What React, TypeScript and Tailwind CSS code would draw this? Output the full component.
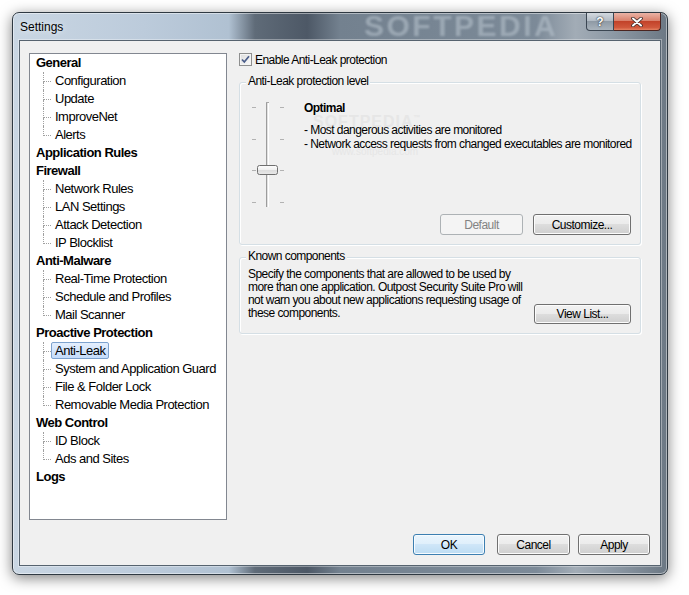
import React from 'react';

type Group = { label: string; children: string[] };

const groups: Group[] = [
  { label: 'General', children: ['Configuration', 'Update', 'ImproveNet', 'Alerts'] },
  { label: 'Application Rules', children: [] },
  { label: 'Firewall', children: ['Network Rules', 'LAN Settings', 'Attack Detection', 'IP Blocklist'] },
  { label: 'Anti-Malware', children: ['Real-Time Protection', 'Schedule and Profiles', 'Mail Scanner'] },
  {
    label: 'Proactive Protection',
    children: ['Anti-Leak', 'System and Application Guard', 'File & Folder Lock', 'Removable Media Protection'],
  },
  { label: 'Web Control', children: ['ID Block', 'Ads and Sites'] },
  { label: 'Logs', children: [] },
];

function Tree() {
  return (
    <div className="h-[467px] w-[198px] shrink-0 border border-[#828790] bg-white text-[13px] tracking-[-0.5px] text-black">
      {groups.map((g) => (
        <div key={g.label}>
          <div className="h-[18px] pl-[6px] font-bold leading-[18px]">{g.label}</div>
          {g.children.map((c, i) => {
            const last = i === g.children.length - 1;
            const sel = c === 'Anti-Leak';
            return (
              <div key={c} className="flex h-[18px]">
                <div className="w-[13px] shrink-0" />
                <div className="flex w-[8px] shrink-0 flex-col">
                  <div className="h-[10px] border-b border-l border-dotted border-[#a0a0a0]" />
                  {!last && <div className="flex-1 border-l border-dotted border-[#a0a0a0]" />}
                </div>
                {sel ? (
                  <span className="h-[17px] rounded-[2px] border border-[#7da2ce] bg-[linear-gradient(180deg,#e4effd_0%,#d3e5fc_50%,#c4dcfb_100%)] px-[3px] leading-[15px] whitespace-nowrap">
                    {c}
                  </span>
                ) : (
                  <span className="h-[17px] border border-transparent px-[3px] leading-[15px] whitespace-nowrap">
                    {c}
                  </span>
                )}
              </div>
            );
          })}
        </div>
      ))}
    </div>
  );
}

function Button({
  children,
  className,
  kind = 'normal',
}: {
  children: React.ReactNode;
  className: string;
  kind?: 'normal' | 'default' | 'disabled';
}) {
  const look =
    kind === 'default'
      ? 'border-[#3c7fb1] bg-[linear-gradient(180deg,#eaf5fd_0%,#dfeffb_49%,#cfe6f8_50%,#bcdcf3_100%)] shadow-[inset_0_0_0_1px_#f6fbff] text-black'
      : kind === 'disabled'
        ? 'border-[#adb2b5] bg-[#f4f4f4] text-[#838383]'
        : 'border-[#707070] bg-[linear-gradient(180deg,#f2f2f2_0%,#ebebeb_49%,#dddddd_50%,#cfcfcf_100%)] shadow-[inset_0_0_0_1px_#fcfcfc] text-black';
  return (
    <div
      className={`flex shrink-0 items-center justify-center rounded-[3px] border text-[12px] leading-none tracking-[-0.5px] ${look} ${className}`}
    >
      {children}
    </div>
  );
}

function Slider() {
  const ticks = [7, 39, 70, 102];
  return (
    <svg width="34" height="110" viewBox="0 0 34 110" className="shrink-0">
      <defs>
        <linearGradient id="thumb" x1="0" y1="0" x2="0" y2="1">
          <stop offset="0" stopColor="#fdfdfd" />
          <stop offset="0.45" stopColor="#f1f1f1" />
          <stop offset="0.5" stopColor="#dcdcdc" />
          <stop offset="1" stopColor="#e9e9e9" />
        </linearGradient>
      </defs>
      {ticks.map((y) => (
        <g key={y}>
          <rect x="0" y={y} width="4" height="1" fill="#b2b2b2" />
          <rect x="28" y={y} width="4" height="1" fill="#b2b2b2" />
        </g>
      ))}
      <rect x="14" y="2" width="1" height="105" fill="#9c9c9c" />
      <rect x="15" y="2" width="1" height="105" fill="#e2e2e2" />
      <rect x="16" y="2" width="1" height="105" fill="#ffffff" />
      <rect x="14" y="2" width="3" height="1" fill="#a8a8a8" />
      <rect x="5.5" y="65.5" width="20" height="9" rx="2" fill="url(#thumb)" stroke="#6f6f6f" />
    </svg>
  );
}

export default function App() {
  return (
    <div className="h-[595px] w-[689px] overflow-hidden bg-white pl-[12px] pt-[12px] font-['Liberation_Sans',Arial,sans-serif]">
      <div className="relative flex h-[563px] w-[656px] flex-col rounded-[7px] border border-[#2f3942] bg-[linear-gradient(90deg,#c9d6e3_0%,#bccbdb_20%,#b0c1d2_33%,#5f6b78_37%,#4d5866_45%,#73818f_50%,#7c8a98_80%,#a2acb6_86%,#8c98a4_92%,#6c7884_100%)] px-[6px] pb-[8px] shadow-[0_3px_14px_rgba(0,0,0,0.5),inset_0_0_0_1px_rgba(255,255,255,0.45)]">
        {/* glass watermark seen through the frame */}
        <div className="pointer-events-none absolute left-[351px] top-[-2px] select-none text-[30px] font-bold leading-none tracking-[2.5px] text-[#b4bfca]/60 blur-[1px]">
          SOFTPEDIA
        </div>

        {/* title bar */}
        <div className="relative flex h-[27px] items-start justify-between">
          <div className="pl-[1px] pt-[7px] text-[12px] leading-[14px] text-black [text-shadow:0_0_6px_rgba(255,255,255,0.9)]">
            Settings
          </div>
          <div className="flex">
            <div className="flex h-[18px] w-[28px] items-center justify-center rounded-bl-[4px] border border-t-0 border-[#3b4652] bg-[linear-gradient(180deg,#d3d9df_0%,#b3bcc5_45%,#8f9aa5_50%,#a9b3bc_100%)] text-[12px] font-bold leading-none text-white [text-shadow:0_0_2px_#2a3038,0_0_1px_#2a3038]">
              ?
            </div>
            <div className="flex h-[18px] w-[47px] items-center justify-center rounded-br-[4px] border border-l-0 border-t-0 border-[#4a2420] bg-[linear-gradient(180deg,#eab3a6_0%,#d9826d_45%,#c2432a_50%,#d0583c_85%,#e48262_100%)]">
              <svg width="12" height="10" viewBox="0 0 12 10">
                <path d="M2 1.5 L10 8.5 M10 1.5 L2 8.5" stroke="#3a2a28" strokeWidth="3.6" strokeLinecap="round" />
                <path d="M2 1.5 L10 8.5 M10 1.5 L2 8.5" stroke="#ffffff" strokeWidth="2" strokeLinecap="round" />
              </svg>
            </div>
          </div>
        </div>

        {/* client area */}
        <div className="relative flex h-[526px] flex-col border border-[#56636f] bg-[#f0f0f0] pl-[9px] pt-[12px] text-black shadow-[0_0_0_1px_rgba(255,255,255,0.35)]">
          {/* faint watermark */}
          <div className="pointer-events-none absolute left-[293px] top-[73px] select-none text-[16px] font-bold leading-none tracking-[1px] text-[#e6e6e6]">
            SOFTPEDIA<span className="align-top text-[7px]">™</span>
          </div>
          <div className="pointer-events-none absolute left-[312px] top-[106px] select-none text-[10px] leading-none text-[#e6e6e6]">
            www.softpedia.com
          </div>

          <div className="flex gap-[12px]">
            <Tree />

            <div className="flex w-[402px] flex-col text-[12px] tracking-[-0.55px]">
              {/* checkbox */}
              <div className="flex h-[13px] items-center gap-[3px]">
                <div className="flex h-[13px] w-[13px] items-center justify-center border border-[#8e8f8f] bg-[linear-gradient(135deg,#dcdcdc_0%,#fbfbfb_100%)] shadow-[inset_0_0_0_1px_#f4f4f4]">
                  <svg width="11" height="11" viewBox="0 0 11 11">
                    <path d="M2 5.5 L4.3 8 L9 2.2" fill="none" stroke="#4a5d8a" strokeWidth="1.7" />
                  </svg>
                </div>
                <span className="leading-[14px]">Enable Anti-Leak protection</span>
              </div>

              {/* group 1 */}
              <div className="relative mt-[16px] h-[163px] rounded-[3px] border border-[#d5dfe5] shadow-[inset_1px_1px_0_#ffffff,1px_1px_0_#ffffff]">
                <div className="absolute left-[6px] top-[-9px] bg-[#f0f0f0] px-[2px] leading-[14px]">
                  Anti-Leak protection level
                </div>
                <div className="flex h-full flex-col pl-[12px] pt-[17px]">
                  <div className="flex">
                    <Slider />
                    <div className="ml-[18px] pt-[1px] leading-[14px]">
                      <div className="font-bold">Optimal</div>
                      <div className="mt-[8px]">- Most dangerous activities are monitored</div>
                      <div>- Network access requests from changed executables are monitored</div>
                    </div>
                  </div>
                  <div className="mt-auto flex justify-end gap-[10px] pb-[9px] pr-[9px]">
                    <Button kind="disabled" className="h-[21px] w-[83px]">
                      Default
                    </Button>
                    <Button className="h-[21px] w-[98px]">Customize...</Button>
                  </div>
                </div>
              </div>

              {/* group 2 */}
              <div className="relative mt-[12px] h-[77px] rounded-[3px] border border-[#d5dfe5] shadow-[inset_1px_1px_0_#ffffff,1px_1px_0_#ffffff]">
                <div className="absolute left-[6px] top-[-9px] bg-[#f0f0f0] px-[2px] leading-[14px]">
                  Known components
                </div>
                <div className="flex h-full items-end justify-between pb-[9px] pl-[8px] pr-[9px] pt-[10px]">
                  <div className="mb-[3px] self-start leading-[13px]">
                    Specify the components that are allowed to be used by
                    <br />
                    more than one application. Outpost Security Suite Pro will
                    <br />
                    not warn you about new applications requesting usage of
                    <br />
                    these components.
                  </div>
                  <Button className="h-[20px] w-[97px]">View List...</Button>
                </div>
              </div>
            </div>
          </div>

          {/* bottom buttons */}
          <div className="mt-[14px] flex justify-end pr-[10px]">
            <Button kind="default" className="h-[21px] w-[72px]">
              OK
            </Button>
            <Button className="ml-[12px] h-[21px] w-[73px]">Cancel</Button>
            <Button className="ml-[8px] h-[21px] w-[72px]">Apply</Button>
          </div>
        </div>
      </div>
    </div>
  );
}
